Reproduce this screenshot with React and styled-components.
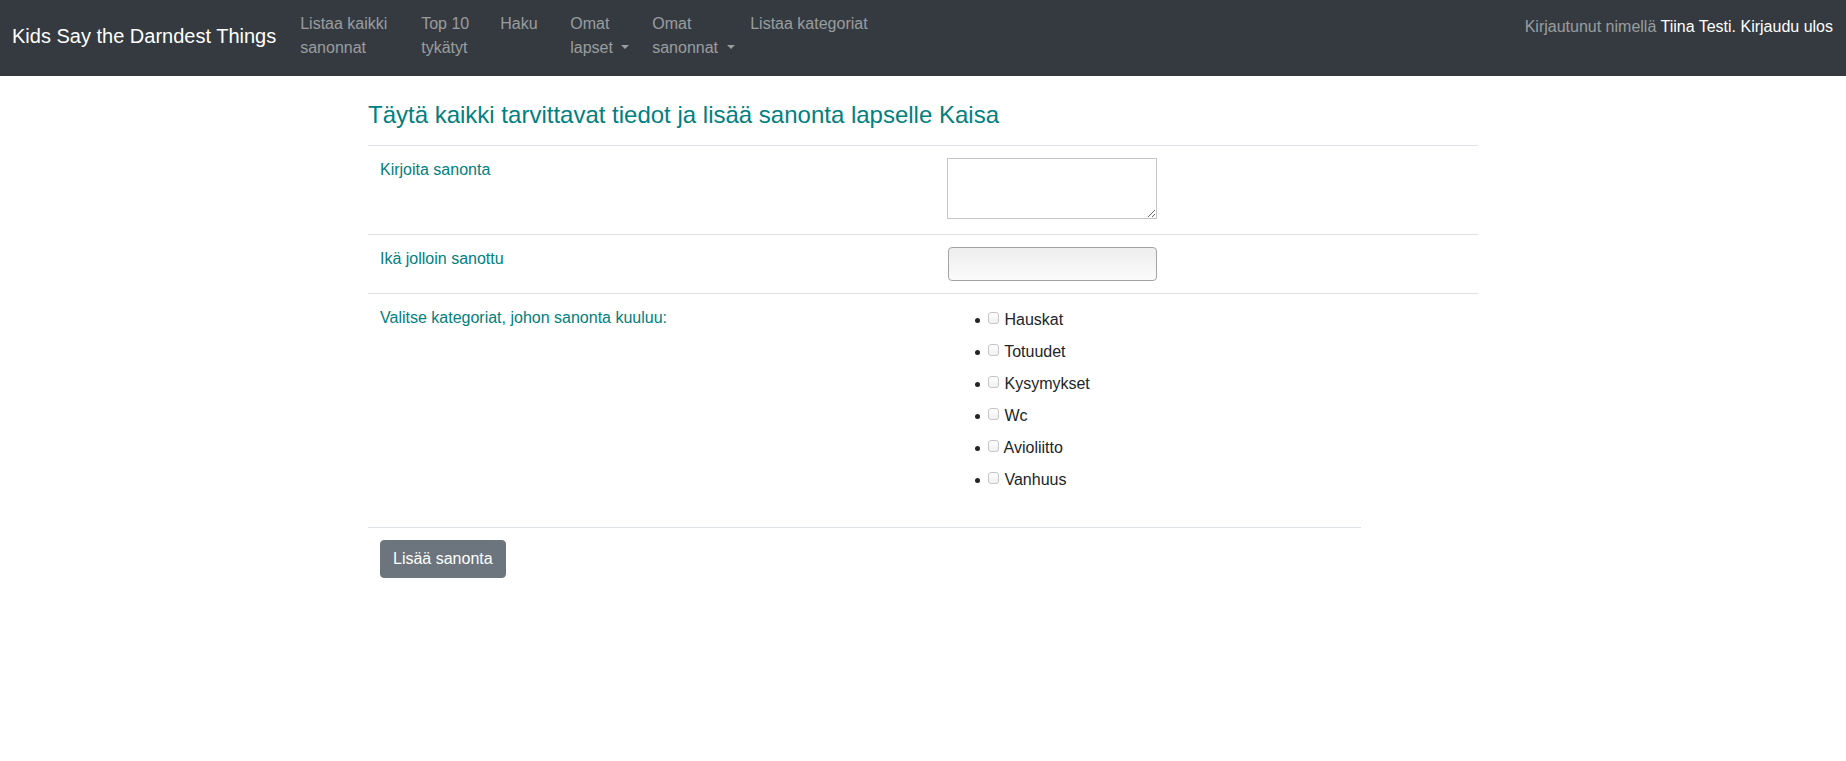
import { styled, createGlobalStyle } from 'styled-components'

const GlobalStyle = createGlobalStyle`
  body {
    margin: 0;
    font-family: "Liberation Sans", Arial, sans-serif;
    font-size: 16px;
    line-height: 1.5;
    color: #212529;
    background: #fff;
  }
`

const Navbar = styled.nav`
  display: flex;
  align-items: flex-start;
  height: 76px;
  box-sizing: border-box;
  padding: 0 13px 0 12px;
  background: #343a40;
`

const Brand = styled.a`
  padding-top: 21px;
  margin-right: 16px;
  font-size: 20px;
  line-height: 30px;
  color: #fff;
  white-space: nowrap;
  text-decoration: none;
`

const NavList = styled.ul`
  display: flex;
  margin: 0;
  padding: 0;
  list-style: none;
`

const NavItem = styled.li`
  width: ${p => (p.$w ? `${p.$w}px` : 'auto')};
  flex-shrink: 0;
`

const NavLink = styled.a`
  display: block;
  padding: 12px 8px 0;
  line-height: 24px;
  color: rgba(255, 255, 255, 0.5);
  text-decoration: none;
  white-space: ${p => (p.$nowrap ? 'nowrap' : 'normal')};
`

const LastWord = styled.span`
  white-space: nowrap;
`

const Caret = styled.span`
  display: inline-block;
  margin-left: 0.255em;
  vertical-align: 0.255em;
  border-top: 0.3em solid;
  border-right: 0.3em solid transparent;
  border-left: 0.3em solid transparent;
`

const UserText = styled.div`
  margin-left: auto;
  padding-top: 15px;
  line-height: 24px;
  color: rgba(255, 255, 255, 0.5);
  white-space: nowrap;
`

const White = styled.span`
  color: #fff;
`

const Container = styled.main`
  width: 1140px;
  box-sizing: border-box;
  margin: 0 auto;
  padding: 0 15px;
`

const Title = styled.h3`
  margin: 24px 0 16px;
  font-size: 24px;
  font-weight: 400;
  line-height: 29px;
  color: teal;
`

const FormRow = styled.div`
  display: grid;
  grid-template-columns: 567px 1fr;
  border-top: 1px solid #dee2e6;
`

const Cell = styled.div`
  padding: 12px;
`

const Label = styled.label`
  display: block;
  color: teal;
`

const TextArea = styled.textarea`
  display: block;
  width: 210px;
  height: 61px;
  box-sizing: border-box;
  margin: 0 0 3px;
  border: 1px solid #c4c4c4;
  font-family: "Liberation Mono", monospace;
  font-size: 13px;
`

const Input = styled.input`
  display: block;
  width: 209px;
  height: 34px;
  box-sizing: border-box;
  margin: 0 0 0 1px;
  border: 1px solid #a3a3a3;
  border-radius: 4px;
  background: linear-gradient(#ededed, #fbfbfb);
`

const CategoryList = styled.ul`
  margin: 0 0 25px;
  padding-left: 44px;
`

const Category = styled.li`
  height: 22px;
  padding-top: 2px;
  margin-bottom: 8px;
  line-height: 24px;
`

const Check = styled.input`
  appearance: none;
  display: inline-block;
  width: 11px;
  height: 12px;
  box-sizing: border-box;
  margin: 0 1px 1px -3px;
  border: 1px solid #c6c6c6;
  border-radius: 3px;
  background: linear-gradient(#fdfdfd, #f1f1f1);
  vertical-align: baseline;
`

const Footer = styled.div`
  width: 993px;
  padding: 12px;
  box-sizing: border-box;
  border-top: 1px solid #dee2e6;
`

const Button = styled.button`
  padding: 6px 12px;
  border: 1px solid #6c757d;
  border-radius: 4px;
  background: #6c757d;
  color: #fff;
  font-family: inherit;
  font-size: 16px;
  line-height: 24px;
`

const navItems = [
  { text: 'Listaa kaikki sanonnat', w: 121 },
  { text: 'Top 10 tykätyt', w: 79 },
  { text: 'Haku', w: 70 },
  { text: 'Omat lapset', w: 82, dropdown: true },
  { text: 'Omat sanonnat', w: 98, dropdown: true },
  { text: 'Listaa kategoriat', nowrap: true },
]

const categories = ['Hauskat', 'Totuudet', 'Kysymykset', 'Wc', 'Avioliitto', 'Vanhuus']

const NavText = ({ text, dropdown }) => {
  if (!dropdown) return text
  const words = text.split(' ')
  const last = words.pop()
  return (
    <>
      {words.join(' ')}{' '}
      <LastWord>
        {last} <Caret />
      </LastWord>
    </>
  )
}

const App = () => {
  return (
    <>
      <GlobalStyle />
      <Navbar>
        <Brand href="#">Kids Say the Darndest Things</Brand>
        <NavList>
          {navItems.map(item => (
            <NavItem key={item.text} $w={item.w}>
              <NavLink href="#" $nowrap={item.nowrap}>
                <NavText text={item.text} dropdown={item.dropdown} />
              </NavLink>
            </NavItem>
          ))}
        </NavList>
        <UserText>
          Kirjautunut nimellä <White>Tiina Testi.</White> <White>Kirjaudu ulos</White>
        </UserText>
      </Navbar>
      <Container>
        <Title>Täytä kaikki tarvittavat tiedot ja lisää sanonta lapselle Kaisa</Title>
        <form>
          <FormRow>
            <Cell>
              <Label>Kirjoita sanonta</Label>
            </Cell>
            <Cell>
              <TextArea />
            </Cell>
          </FormRow>
          <FormRow>
            <Cell>
              <Label>Ikä jolloin sanottu</Label>
            </Cell>
            <Cell>
              <Input type="text" />
            </Cell>
          </FormRow>
          <FormRow>
            <Cell>
              <Label>Valitse kategoriat, johon sanonta kuuluu:</Label>
            </Cell>
            <Cell>
              <CategoryList>
                {categories.map(c => (
                  <Category key={c}>
                    <Check type="checkbox" /> {c}
                  </Category>
                ))}
              </CategoryList>
            </Cell>
          </FormRow>
          <Footer>
            <Button type="button">Lisää sanonta</Button>
          </Footer>
        </form>
      </Container>
    </>
  )
}

export default App
